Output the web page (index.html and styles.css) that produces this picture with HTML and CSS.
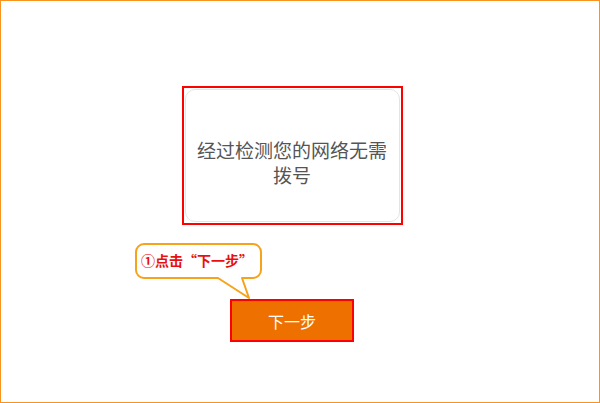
FILE: index.html
```html
<!DOCTYPE html>
<html lang="zh-CN">

<head>
  <meta charset="UTF-8">
  <meta name="viewport" content="width=device-width, initial-scale=1.0">
  <title>网络检测</title>
  <link rel="stylesheet" href="styles.css">
</head>

<body>
  <div class="page">
    <div class="result-box">
      <div class="result-card">
        <p>经过检测您的网络无需拨号</p>
      </div>
    </div>

    <div class="action">
      <div class="tip">
        <svg class="tip-shape" width="130" height="58" viewBox="0 0 130 58">
          <path d="M9 1 H118 A8 8 0 0 1 126 9 V27 A8 8 0 0 1 118 35 H107 L114 55 L83 35 H9 A8 8 0 0 1 1 27 V9 A8 8 0 0 1 9 1 Z"
            fill="#fff" stroke="#f7a21b" stroke-width="2" stroke-linejoin="round" />
        </svg>
        <span class="tip-text">①点击“下一步”</span>
      </div>
      <button class="next-btn">下一步</button>
    </div>
  </div>
</body>

</html>
```

FILE: styles.css
```css
body {
  margin: 0;
  background-color: #fff;
  font-family: "Noto Sans CJK SC", "Noto Sans", sans-serif;
}

.page {
  box-sizing: border-box;
  width: 600px;
  height: 403px;
  border: 1px solid #f7931e;
  display: flex;
  flex-direction: column;
  align-items: center;
  padding-right: 16px;
}

.result-box {
  box-sizing: border-box;
  width: 221px;
  height: 139px;
  margin-top: 85px;
  border: 2px solid #f00;
  padding: 1px;
}

.result-card {
  box-sizing: border-box;
  height: 100%;
  border: 1px solid #e4e4e4;
  border-radius: 10px;
  display: flex;
  align-items: center;
  justify-content: center;
  padding: 12px 6px 0;
}

.result-card p {
  margin: 0;
  width: 200px;
  font-size: 19px;
  line-height: 25px;
  color: #555;
  text-align: center;
}

.action {
  position: relative;
  margin-top: 74px;
}

.tip {
  position: absolute;
  left: -95px;
  top: -56px;
  width: 130px;
  height: 58px;
}

.tip-shape {
  display: block;
}

.tip-text {
  position: absolute;
  left: 6px;
  top: 6px;
  font-size: 14px;
  line-height: 22px;
  font-weight: bold;
  color: #e8100f;
  white-space: nowrap;
}

.next-btn {
  box-sizing: border-box;
  width: 124px;
  height: 43px;
  background-color: #ee7100;
  border: 2px solid #f00;
  color: #fff;
  font-family: inherit;
  font-size: 16px;
  padding: 0;
  cursor: pointer;
}
```
